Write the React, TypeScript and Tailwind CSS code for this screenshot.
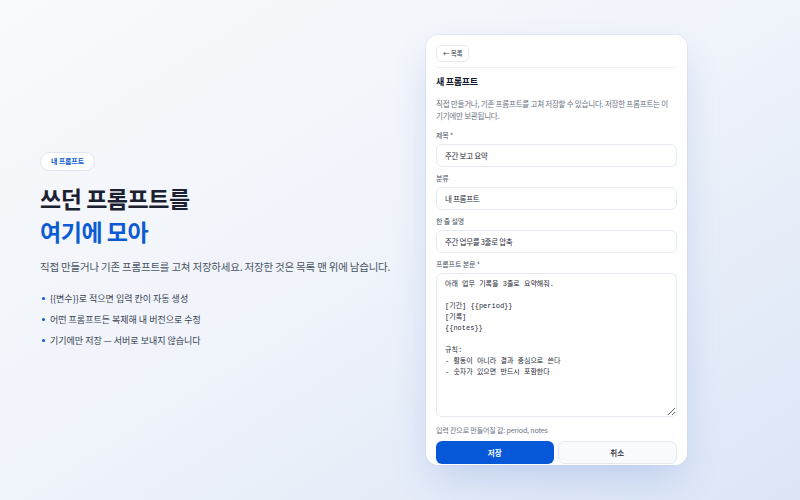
import React from "react";

const KR = '"Noto Sans CJK KR", "Noto Sans", sans-serif';
const MONO = '"Liberation Mono", "Noto Sans CJK KR", monospace';

const body = `아래 업무 기록을 3줄로 요약해줘.

[기간] {{period}}
[기록]
{{notes}}

규칙:
- 활동이 아니라 결과 중심으로 쓴다
- 숫자가 있으면 반드시 포함한다`;

function Field({ label, value }: { label: string; value: string }) {
  return (
    <div className="flex flex-col">
      <div className="h-[10px] leading-[10px] text-[7px] tracking-[-0.02em] text-[#4b5563] mb-[4px]">{label}</div>
      <input
        defaultValue={value}
        className="h-[23px] w-full rounded-[6px] border border-[#e6eaf0] bg-white px-[8px] text-[7.5px] tracking-[-0.04em] text-[#1f2937] outline-none"
        style={{ fontFamily: KR }}
      />
    </div>
  );
}

export default function App() {
  return (
    <div
      className="w-[800px] h-[500px] flex items-center bg-gradient-to-br from-[#f9fafc] via-[#eff3fa] to-[#dce6f7] overflow-hidden"
      style={{ fontFamily: KR }}
    >
      <div className="w-[386px] pl-[40px] flex flex-col">
        <div className="self-start h-[19px] px-[10px] flex items-center rounded-full bg-white border border-[#dfe6f2] text-[7px] font-bold text-[#0b5bd3] tracking-[-0.02em]">
          내 프롬프트
        </div>
        <h1 className="mt-[11px] text-[23px] leading-[33px] font-bold tracking-[-0.02em]">
          <div className="text-[#1b2130]">쓰던 프롬프트를</div>
          <div className="text-[#0b5bd3]">여기에 모아</div>
        </h1>
        <p className="mt-[13px] text-[10.5px] leading-[12px] tracking-[-0.02em] text-[#4b5563] whitespace-nowrap">
          직접 만들거나 기존 프롬프트를 고쳐 저장하세요. 저장한 것은 목록 맨 위에 남습니다.
        </p>
        <ul className="mt-[18px] flex flex-col gap-[5px]">
          {[
            "{{변수}}로 적으면 입력 칸이 자동 생성",
            "어떤 프롬프트든 복제해 내 버전으로 수정",
            "기기에만 저장 — 서버로 보내지 않습니다",
          ].map((t) => (
            <li key={t} className="flex items-center h-[16px] text-[9px] text-[#374151] whitespace-nowrap">
              <span className="w-[3px] h-[3px] rounded-full bg-[#0b5bd3] ml-[2px] mr-[5px]" />
              {t}
            </li>
          ))}
        </ul>
      </div>

      <div className="w-[261px] h-[430px] ml-[40px] rounded-[12px] bg-white overflow-hidden shadow-[0_18px_40px_-8px_rgba(40,90,200,0.22),0_0_0_1px_rgba(220,228,240,0.6)] px-[10px] pt-[10px] flex flex-col">
        <div className="flex pb-[5px] border-b border-[#eef1f5]">
          <div className="flex items-center h-[17px] px-[6px] rounded-[5px] border border-[#e6eaf0] bg-white text-[6.5px] leading-none text-[#374151] tracking-[-0.02em]">
            ← 목록
          </div>
        </div>
        <div className="mt-[8px] h-[12px] leading-[12px] text-[9px] font-bold text-[#111827] tracking-[-0.03em]">새 프롬프트</div>
        <p className="mt-[10px] text-[7.5px] leading-[12px] tracking-[-0.03em] text-[#6b7280] break-keep">
          직접 만들거나, 기존 프롬프트를 고쳐 저장할 수 있습니다. 저장한 프롬프트는 이 기기에만 보관됩니다.
        </p>
        <div className="mt-[8px] flex flex-col gap-[6px]">
          <Field label="제목 *" value="주간 보고 요약" />
          <Field label="분류" value="내 프롬프트" />
          <Field label="한 줄 설명" value="주간 업무를 3줄로 압축" />
          <div className="flex flex-col">
            <div className="h-[10px] leading-[10px] text-[7px] tracking-[-0.02em] text-[#4b5563] mb-[4px]">프롬프트 본문 *</div>
            <textarea
              defaultValue={body}
              className="h-[144px] w-full rounded-[6px] border border-[#e6eaf0] bg-white px-[8px] py-[5px] text-[7px] leading-[11px] text-[#1f2937] outline-none resize-y"
              style={{ fontFamily: MONO }}
            />
          </div>
        </div>
        <div className="mt-[8px] h-[10px] leading-[10px] text-[7px] tracking-[-0.02em] text-[#6b7280]">
          입력 칸으로 만들어질 값: period, notes
        </div>
        <div className="mt-[6px] flex gap-[4px]">
          <button className="flex-1 h-[23px] rounded-[6px] bg-[#0758d8] text-white text-[7.5px] font-bold">저장</button>
          <button className="flex-1 h-[23px] rounded-[6px] bg-[#f8fafc] border border-[#e6eaf0] text-[#1f2937] text-[7.5px] font-medium">
            취소
          </button>
        </div>
      </div>
    </div>
  );
}
